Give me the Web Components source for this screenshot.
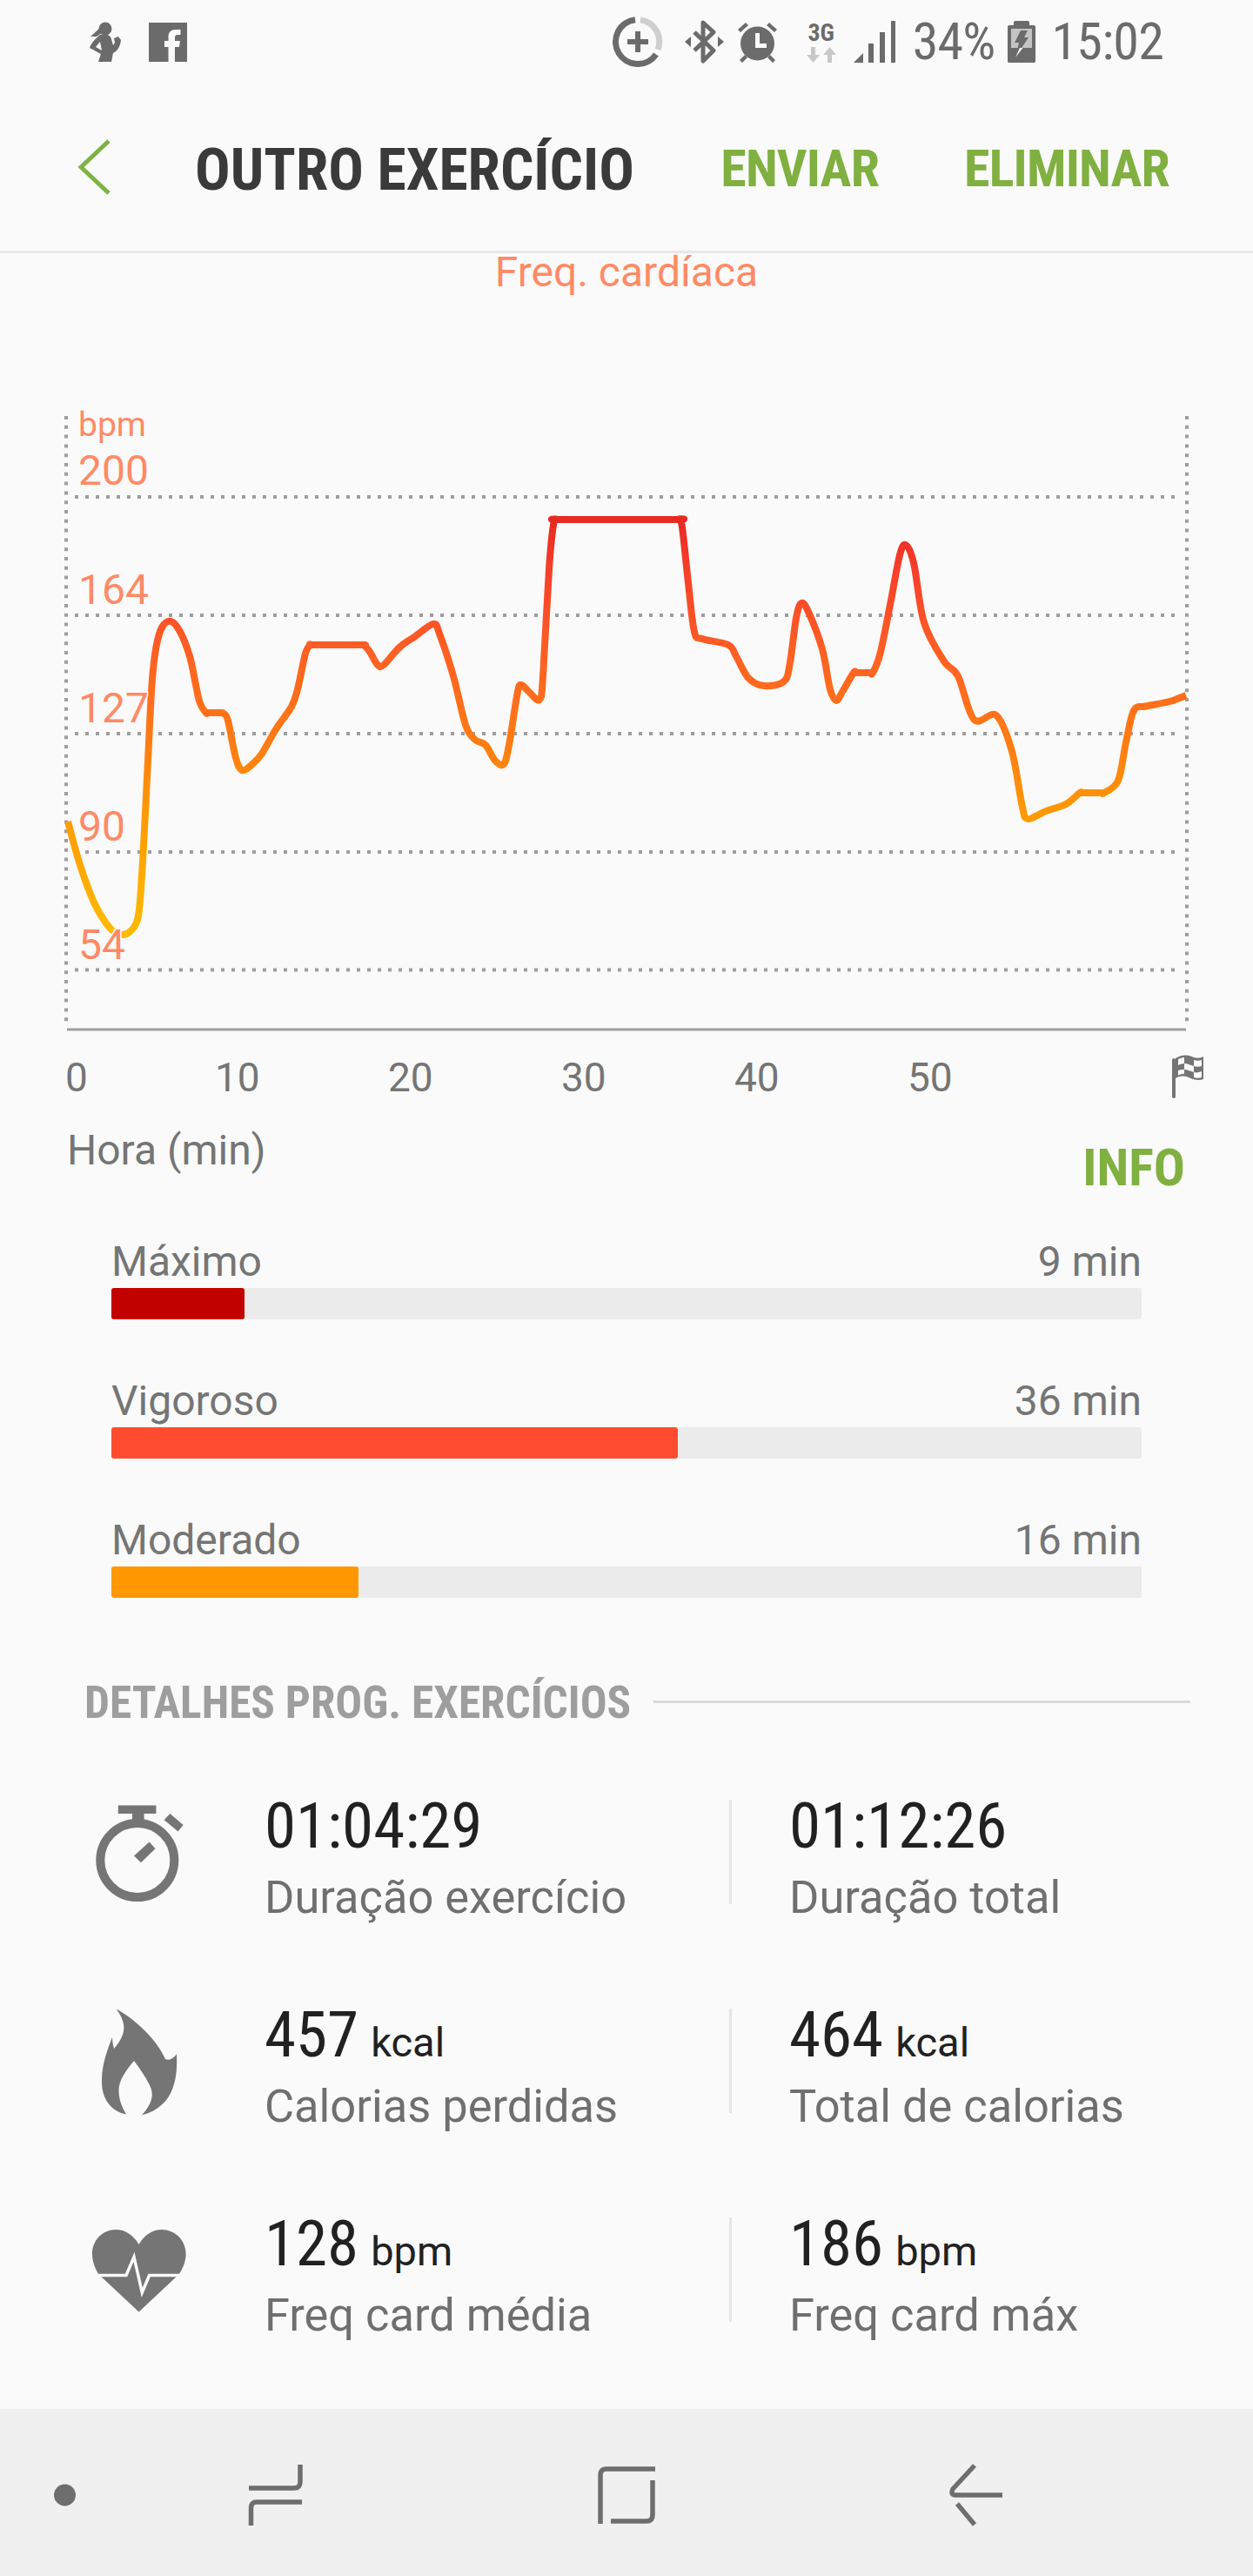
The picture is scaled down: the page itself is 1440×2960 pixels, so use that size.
<!DOCTYPE html>
<html>
<head>
<meta charset="utf-8">
<style>
html, body { margin: 0; padding: 0; background: #fafafa; }
body { width: 1440px; height: 2960px; overflow: hidden; font-family: Roboto, "Liberation Sans", sans-serif; }
</style>
</head>
<body>
<status-bar></status-bar>
<app-header>OUTRO EXERCÍCIO</app-header>
<hr-chart></hr-chart>
<zone-list>
  <zone-bar label="Máximo" value="9 min" width="153" color="#c30000"></zone-bar>
  <zone-bar label="Vigoroso" value="36 min" width="651" color="#ff4c30"></zone-bar>
  <zone-bar label="Moderado" value="16 min" width="284" color="#ff9800"></zone-bar>
</zone-list>
<section-title>DETALHES PROG. EXERCÍCIOS</section-title>
<stat-list>
  <stat-row>
    <svg slot="icon" width="120" height="130" viewBox="0 0 120 130" fill="#757575">
      <circle cx="57.8" cy="69.6" r="42.5" fill="none" stroke="#757575" stroke-width="10"/>
      <rect x="35.8" y="6.5" width="43.6" height="9.5"/><rect x="52" y="16" width="13.6" height="10"/>
      <polygon points="95.4,16 110.6,29 104.6,36.4 88.6,23.3"/><polygon points="71.6,48.6 78.5,56.2 62,72.2 54,64.6"/>
    </svg>
    <stat-item slot="a" value="01:04:29" label="Duração exercício"></stat-item>
    <stat-item slot="b" value="01:12:26" label="Duração total"></stat-item>
  </stat-row>
  <stat-row>
    <svg slot="icon" width="120" height="130" viewBox="0 0 120 130" fill="#757575">
      <path d="M33.5 .5C55 12 80 35 90 58C95 60 100 57 103 52C104 75 103 112 63 122.6C74 110 78 100 72 88C67 78 60 68 54 60C46 70 36 82 36.5 95C37 108 42 116 45 121.5C28 118 16 104 17 81C17.5 62 24 46 29 33C29 38 30 42 31 46C38 38 44 28 42 18C41 12 38 6 33.5 .5Z"/>
    </svg>
    <stat-item slot="a" value="457" unit="kcal" label="Calorias perdidas"></stat-item>
    <stat-item slot="b" value="464" unit="kcal" label="Total de calorias"></stat-item>
  </stat-row>
  <stat-row>
    <svg slot="icon" width="120" height="130" viewBox="0 0 120 130" fill="#757575">
      <path d="M59.6 31C53 20 44 14 33 14C18 14 6 26 6 42C6 50 9 58 13 65L59.6 108.6L106 65C110.5 58 113.6 50 113.6 42C113.6 26 101 14 86 14C75 14 66 20 59.6 31Z"/>
      <path d="M4 66.5H45L54 45.4L63.3 86.3L71.6 66.5H116" fill="none" stroke="#fafafa" stroke-width="3.5" stroke-linejoin="miter"/>
    </svg>
    <stat-item slot="a" value="128" unit="bpm" label="Freq card média"></stat-item>
    <stat-item slot="b" value="186" unit="bpm" label="Freq card máx"></stat-item>
  </stat-row>
</stat-list>
<nav-bar></nav-bar>

<script>
const statusTemplate = document.createElement('template');
statusTemplate.innerHTML = `
<style>
  :host { display: flex; height: 96px; align-items: center; justify-content: space-between; padding: 0 103px; color: #6b6b6b; }
  .left, .right { display: flex; align-items: center; }
  svg { display: block; fill: #6b6b6b; }
  .txt { font-size: 60px; line-height: 60px; font-stretch: 75%; white-space: nowrap; letter-spacing: -.8px; }
  .pct { margin-left: 20px; }
  .bat { margin-left: 14px; }
  .time { margin-left: 19px; }
  .net { display: flex; flex-direction: column; align-items: center; width: 36px; margin-right: 19px; }
  .net span { font-size: 28px; line-height: 26px; font-weight: 700; font-stretch: 75%; }
</style>
<div class="left">
  <svg width="36" height="46" viewBox="0 0 36 46" style="margin-right:32px">
    <circle cx="18" cy="8" r="7.500"/>
    <path d="M12 7L1 17L8 17L14 13ZM12 15C18 13 24 15 25 20L27 27L29 24L28 19L33 17L36 21C35 28 33 33 27 36L25 46H10L13 37L0 30C2 24 7 19 12 15ZM12 23L7 29L14 33Z"/>
  </svg>
  <svg width="44" height="45" viewBox="0 0 44 45"><path fill-rule="evenodd" d="M0 0H44V45H30V28H35L36 21H30V17C30 15 31 14 33 14H36.500V8H31C25.500 8 22.500 11 22.500 16V21H18V28H22.500V45H0Z"/></svg>
</div>
<div class="right">
  <svg width="58" height="58" viewBox="0 0 58 58" style="margin-right:25px">
    <path d="M26 3.700A25.500 25.500 0 1 0 50 43.500" fill="none" stroke="#6b6b6b" stroke-width="7"/>
    <path d="M32 3.700A25.500 25.500 0 0 1 52 38" fill="none" stroke="#cfcfcf" stroke-width="7"/>
    <path d="M26 17h6v9h9v6h-9v9h-6v-9h-9v-6h9z"/>
  </svg>
  <svg width="45" height="50" viewBox="0 0 45 50" style="margin-right:15px">
    <path d="M11 14L33 35L21 47V3L33 14L11 35" fill="none" stroke="#6b6b6b" stroke-width="5" stroke-linejoin="round"/>
    <polygon points="0,25 7,19 7,31"/><polygon points="45,25 38,19 38,31"/>
  </svg>
  <svg width="47" height="47" viewBox="0 0 47 47" style="margin-right:32px">
    <circle cx="23.500" cy="25" r="19.500"/>
    <path d="M1 9L10 1L13 4L4 12ZM46 9L37 1L34 4L43 12ZM9 38L3 44L6 47L12 41ZM38 38L44 44L41 47L35 41Z"/>
    <path d="M21 13h5v12h8v5H21z" fill="#fafafa"/>
  </svg>
  <div class="net">
    <span>3G</span>
    <svg width="36" height="18" viewBox="0 0 36 18" style="margin-top:3px"><path d="M11 0v9h5l-7.500 9L1 9h5V0zM25 18V9h-5l7.500-9 7.500 9h-5v9z" fill="#c8c8c8"/></svg>
  </div>
  <svg width="48" height="48" viewBox="0 0 48 48">
    <polygon points="0,48 11,37 11,48"/><rect x="17" y="26" width="6" height="22"/><rect x="30" y="13" width="6" height="35"/><rect x="43" y="0" width="5" height="48"/>
  </svg>
  <span class="txt pct">34%</span>
  <svg class="bat" width="32" height="48" viewBox="0 0 32 48">
    <path d="M9 0h14c1.500 0 2 1 2 2v3h5c1.500 0 2 1 2 2v39c0 1.500-.5 2-2 2H2c-1.500 0-2-.5-2-2V7c0-1 .5-2 2-2h5V2c0-1 .5-2 2-2z"/>
    <rect x="4" y="9" width="24" height="22" fill="#c4c4c4"/>
    <path d="M15 11h8l-4 8h5L9 42l4-17H8z" fill="#6b6b6b"/>
    <path d="M14 31h3.500L9 42z" fill="#fafafa"/>
  </svg>
  <span class="txt time">15:02</span>
</div>
`;
class StatusBar extends HTMLElement {
  connectedCallback() {
    this.attachShadow({ mode: 'open' }).appendChild(statusTemplate.content.cloneNode(true));
  }
}
customElements.define('status-bar', StatusBar);

const headerTemplate = document.createElement('template');
headerTemplate.innerHTML = `
<style>
  :host { display: flex; height: 192px; align-items: center; border-bottom: 3px solid #e8e8e8; padding: 0 96px 0 90px; font-weight: 700; }
  svg { display: block; flex: none; margin-right: 97px; }
  .title { font-size: 67.500px; color: #3a3a3a; white-space: nowrap; flex: 1; font-stretch: 75%; margin-top: 4px; }
  .act { font-size: 60px; color: #80b040; font-stretch: 75%; margin-top: 3px; letter-spacing: -.8px; }
  .send { margin-right: 98px; }
</style>
<svg width="37" height="64" viewBox="0 0 37 64"><path d="M35 2L3 32L35 62" fill="none" stroke="#7cb342" stroke-width="5"/></svg>
<span class="title"><slot></slot></span>
<span class="act send">ENVIAR</span>
<span class="act">ELIMINAR</span>
`;
class AppHeader extends HTMLElement {
  connectedCallback() {
    this.attachShadow({ mode: 'open' }).appendChild(headerTemplate.content.cloneNode(true));
  }
}
customElements.define('app-header', AppHeader);

// curve points measured off the screenshot, real px
const hrPoints = [[78,944],[92,994],[108,1037],[122,1061],[133,1072],[142,1074],[150,1070],[156,1062],[160,1045],[164,990],[170,874],[174.5,787],[179,746],[186,721],[196.5,714],[207,726],[218,754],[225,787],[229.5,807],[236.5,819],[240,819],[254,819],[257,820],[262,828],[271,871],[278,885],[289,879],[301,866],[317,838],[335,812],[342,792],[351,751],[357,741],[361,741],[415,741],[419,742],[425,749],[434,764],[441,764],[459,744],[477.5,731],[498,717],[505,728],[521,777],[535,833],[546,850],[558,856],[569,874],[579,878],[585,856],[594.5,797],[599,787],[608,795],[620,804],[624,777],[631,654],[636,603],[640,597],[645,597],[775,597],[780,597],[784,606],[791,670],[798,726],[807,734],[837,741],[846,754],[860,779],[878,788],[901,783],[908,761],[915,710],[921,693],[929,703],[945,746],[954,792],[961,805],[968,795],[981,773],[985,773],[999,773],[1003,773],[1011.5,751],[1023,695],[1034.5,636],[1042,627],[1050.5,649],[1062,715.5],[1085,760],[1101,777],[1119.5,827],[1145,822],[1163,863.5],[1174.5,925],[1181,941],[1202,932],[1225,924],[1241,911],[1245,911],[1265,911],[1269,911],[1285,897],[1294,853],[1303,816.5],[1317,811.5],[1344.5,806],[1363,799]];

function smoothPath(pts) {
  let d = 'M' + pts[0][0] + ' ' + pts[0][1];
  for (let i = 0; i < pts.length - 1; i++) {
    const p0 = pts[Math.max(i - 1, 0)], p1 = pts[i], p2 = pts[i + 1], p3 = pts[Math.min(i + 2, pts.length - 1)];
    const t = 0.166;
    d += 'C' + (p1[0] + (p2[0] - p0[0]) * t).toFixed(1) + ' ' + (p1[1] + (p2[1] - p0[1]) * t).toFixed(1) + ' '
      + (p2[0] - (p3[0] - p1[0]) * t).toFixed(1) + ' ' + (p2[1] - (p3[1] - p1[1]) * t).toFixed(1) + ' ' + p2[0] + ' ' + p2[1];
  }
  return d;
}

class HrChart extends HTMLElement {
  connectedCallback() {
    const grid = [571, 707, 843, 979, 1114.5].map(y =>
      `<line x1="86" x2="1354" y1="${y}" y2="${y}" stroke="#9e9e9e" stroke-width="4" stroke-dasharray="4 8"/>`).join('');
    const yLabels = [['bpm',501,39],['200',557,48],['164',693.5,48],['127',830,48],['90',965.5,48],['54',1102,48]].map(l =>
      `<text x="90" y="${l[1]}" font-size="${l[2]}" fill="#ff8a65" stroke="#fafafa" stroke-width="3" paint-order="stroke">${l[0]}</text>`).join('');
    const xLabels = [['0',75],['10',247],['20',446],['30',645],['40',844],['50',1043]].map(l =>
      `<text x="${l[1]}" y="1254" font-size="46" fill="#757575">${l[0]}</text>`).join('');
    this.attachShadow({ mode: 'open' }).innerHTML = `
<style>
  :host { display: block; }
  .freq { text-align: center; font-size: 48px; line-height: 56px; color: #ff8a65; height: 165px; margin-top: -6px; }
  svg { display: block; font-family: Roboto, sans-serif; }
  .foot { display: flex; justify-content: space-between; align-items: flex-start; height: 132px; padding: 0 78px 0 77px; }
  .hora { font-size: 48px; line-height: 56px; color: #757575; margin-top: 4px; }
  .info { font-size: 60px; line-height: 70px; font-weight: 700; color: #80b040; font-stretch: 75%; margin-top: 17px; }
</style>
<div class="freq">Freq. cardíaca</div>
<svg width="1440" height="840" viewBox="0 450 1440 840">
  <defs>
    <linearGradient id="hr" gradientUnits="userSpaceOnUse" x1="0" x2="0" y1="597" y2="1070">
      <stop offset="0" stop-color="#e62a22"/>
      <stop offset=".13" stop-color="#f8402a"/>
      <stop offset=".32" stop-color="#ff5f24"/>
      <stop offset=".55" stop-color="#ff7d12"/>
      <stop offset=".72" stop-color="#ff9a04"/>
      <stop offset="1" stop-color="#ffbb00"/>
    </linearGradient>
  </defs>
  <line x1="76" x2="76" y1="478" y2="1178" stroke="#9e9e9e" stroke-width="4" stroke-dasharray="4 6.800"/>
  <line x1="1364" x2="1364" y1="478" y2="1178" stroke="#9e9e9e" stroke-width="4" stroke-dasharray="4 6.800"/>
  ${grid}
  <line x1="77" x2="1363" y1="1183" y2="1183" stroke="#9e9e9e" stroke-width="3"/>
  <path d="${smoothPath(hrPoints)}" fill="none" stroke="url(#hr)" stroke-width="8" stroke-linejoin="round"/>
  ${yLabels}${xLabels}
  <g fill="#757575">
    <rect x="1347" y="1216" width="4" height="46" rx="2"/>
    <path fill-rule="evenodd" d="M1351 1216C1359 1211 1366 1212 1372 1215C1376 1216 1380 1216 1383 1214V1240C1378 1242 1372 1241 1366 1238C1361 1236 1356 1236 1351 1239ZM1354 1217V1224C1358 1222 1362 1222 1361 1222V1215C1359 1215 1356 1216 1354 1217ZM1361 1222V1229C1365 1229 1368 1231 1372 1232V1225C1368 1224 1365 1222 1361 1222ZM1372 1225C1375 1226 1378 1226 1381 1225V1218C1378 1219 1375 1219 1372 1218ZM1354 1230V1236C1356 1234 1359 1234 1361 1234V1229C1358 1229 1356 1229 1354 1230ZM1372 1232V1238C1375 1239 1378 1239 1381 1238V1231C1378 1232 1375 1233 1372 1232Z"/>
  </g>
</svg>
<div class="foot"><span class="hora">Hora (min)</span><span class="info">INFO</span></div>
`;
  }
}
customElements.define('hr-chart', HrChart);

class ZoneList extends HTMLElement {
  connectedCallback() {
    this.attachShadow({ mode: 'open' }).innerHTML = `
<style>:host { display: flex; flex-direction: column; gap: 66px; padding: 0 128px; }</style><slot></slot>`;
  }
}
customElements.define('zone-list', ZoneList);

class ZoneBar extends HTMLElement {
  connectedCallback() {
    this.attachShadow({ mode: 'open' }).innerHTML = `
<style>
  :host { display: block; color: #757575; font-size: 48px; }
  .row { display: flex; justify-content: space-between; line-height: 56px; margin-bottom: 2px; }
  .track { height: 36px; background: #ebebeb; border-radius: 3px; }
  .fill { height: 36px; border-radius: 3px; }
</style>
<div class="row"><span>${this.getAttribute('label')}</span><span>${this.getAttribute('value')}</span></div>
<div class="track"><div class="fill" style="width:${this.getAttribute('width')}px;background:${this.getAttribute('color')}"></div></div>`;
  }
}
customElements.define('zone-bar', ZoneBar);

class SectionTitle extends HTMLElement {
  connectedCallback() {
    this.attachShadow({ mode: 'open' }).innerHTML = `
<style>
  :host { display: flex; align-items: center; gap: 26px; padding: 91px 72px 0 97px; font-size: 51.300px; line-height: 60px; font-weight: 700; color: #9e9e9e; }
  span { font-stretch: 75%; white-space: nowrap; }
  i { flex: 1; height: 3px; background: #d9d9d9; margin-top: -3px; }
</style>
<span><slot></slot></span><i></i>`;
  }
}
customElements.define('section-title', SectionTitle);

class StatList extends HTMLElement {
  connectedCallback() {
    this.attachShadow({ mode: 'open' }).innerHTML = `
<style>:host { display: flex; flex-direction: column; gap: 88px; padding-top: 71px; }</style><slot></slot>`;
  }
}
customElements.define('stat-list', StatList);

const rowTemplate = document.createElement('template');
rowTemplate.innerHTML = `
<style>
  :host { display: grid; grid-template-columns: 304px 534px 3px 1fr; height: 152px; }
  .icon { padding: 10px 0 0 100px; }
  .rule { background: #e5e5e5; height: 120px; margin-top: 10px; }
  .b { padding-left: 66px; }
</style>
<div class="icon"><slot name="icon"></slot></div>
<div><slot name="a"></slot></div>
<div class="rule"></div>
<div class="b"><slot name="b"></slot></div>
`;
class StatRow extends HTMLElement {
  connectedCallback() {
    this.attachShadow({ mode: 'open' }).appendChild(rowTemplate.content.cloneNode(true));
  }
}
customElements.define('stat-row', StatRow);

class StatItem extends HTMLElement {
  connectedCallback() {
    const unit = this.getAttribute('unit');
    this.attachShadow({ mode: 'open' }).innerHTML = `
<style>
  :host { display: block; white-space: nowrap; }
  .val { font-size: 73px; line-height: 80px; color: #212121; margin-bottom: 12px; }
  .num { font-stretch: 75%; }
  .unit { font-size: 47px; line-height: 1; margin-left: 14px; }
  .lab { font-size: 52.400px; line-height: 60px; color: #6f6f6f; }
</style>
<div class="val"><span class="num">${this.getAttribute('value')}</span>${unit ? `<span class="unit">${unit}</span>` : ''}</div>
<div class="lab">${this.getAttribute('label')}</div>`;
  }
}
customElements.define('stat-item', StatItem);

class NavBar extends HTMLElement {
  connectedCallback() {
    this.attachShadow({ mode: 'open' }).innerHTML = `
<style>
  :host { display: block; margin-top: 78px; height: 192px; background: #f0f0f0; }
  svg { display: block; }
</style>
<svg width="1440" height="192" viewBox="0 2768 1440 192" fill="none" stroke="#6e6e6e" stroke-width="5.500">
  <circle cx="74.500" cy="2867" r="12.500" fill="#6e6e6e" stroke="none"/>
  <path d="M286 2859H338Q345 2859 345 2852V2832"/>
  <path d="M347 2875H295Q288.500 2875 288.500 2882V2902"/>
  <path d="M753 2837H697Q690 2837 690 2844V2900"/>
  <path d="M750 2850V2890Q750 2897 743 2897H702"/>
  <path d="M1120 2833L1095 2860Q1092 2867 1098 2867H1152" stroke-linejoin="round"/>
  <path d="M1100 2877L1120 2901"/>
</svg>`;
  }
}
customElements.define('nav-bar', NavBar);
</script>
</body>
</html>
